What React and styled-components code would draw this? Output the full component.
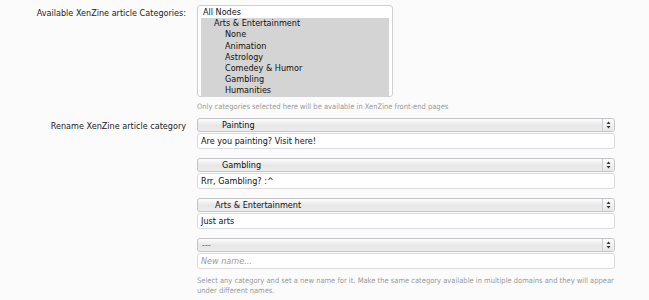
import styled, { createGlobalStyle } from 'styled-components';

const COLORS = {
  page: '#fbfbfc',
  text: '#111',
  label: '#222',
  hint: '#9a9a9a',
  border: '#cfcfd4',
  selected: '#d4d4d4',
  placeholder: '#999'
};

const FONT = '"DejaVu Sans Condensed", "DejaVu Sans", sans-serif';

const GlobalStyle = createGlobalStyle`
  html, body {
    margin: 0;
    padding: 0;
    background: ${COLORS.page};
  }
  body {
    font-family: ${FONT};
    color: ${COLORS.text};
  }
`;

const categories = [
  { name: 'All Nodes', depth: 0, selected: false },
  { name: 'Arts & Entertainment', depth: 1, selected: true },
  { name: 'None', depth: 2, selected: true },
  { name: 'Animation', depth: 2, selected: true },
  { name: 'Astrology', depth: 2, selected: true },
  { name: 'Comedey & Humor', depth: 2, selected: true },
  { name: 'Gambling', depth: 2, selected: true },
  { name: 'Humanities', depth: 2, selected: true }
];

const renames = [
  { category: 'Painting', indent: 24, name: 'Are you painting? Visit here!' },
  { category: 'Gambling', indent: 24, name: 'Rrr, Gambling? :^' },
  { category: 'Arts & Entertainment', indent: 17, name: 'Just arts' },
  { category: '---', indent: 4, name: '', muted: true }
];

function Arrows() {
  return (
    <svg width="5" height="8" viewBox="0 0 5 8">
      <path d="M2.5 0.5 L4.5 3 L0.5 3 Z" fill="#333" />
      <path d="M2.5 7.5 L4.5 5 L0.5 5 Z" fill="#333" />
    </svg>
  );
}

function FakeSelect({ label, indent, muted }) {
  return (
    <SelectBox>
      <SelectText indent={indent} muted={muted}>
        {label}
      </SelectText>
      <ArrowCell>
        <Arrows />
      </ArrowCell>
    </SelectBox>
  );
}

export default function App() {
  return (
    <>
      <GlobalStyle />
      <Form>
        <Row>
          <Label>Available XenZine article Categories:</Label>
          <Control>
            <ListBox>
              {categories.map((c) => (
                <ListItem key={c.name} depth={c.depth} selected={c.selected}>
                  {c.name}
                </ListItem>
              ))}
            </ListBox>
            <Hint>Only categories selected here will be available in XenZine front-end pages</Hint>
          </Control>
        </Row>

        <Row>
          <Label>Rename XenZine article category</Label>
          <Control>
            <Pairs>
              {renames.map((r) => (
                <Pair key={r.category}>
                  <FakeSelect label={r.category} indent={r.indent} muted={r.muted} />
                  <TextBox>
                    {r.name ? r.name : <Placeholder>New name...</Placeholder>}
                  </TextBox>
                </Pair>
              ))}
            </Pairs>
            <Hint $top={7}>
              Select any category and set a new name for it. Make the same category available in
              multiple domains and they will appear under different names.
            </Hint>
          </Control>
        </Row>
      </Form>
    </>
  );
}

const Form = styled.div`
  display: flex;
  flex-direction: column;
  gap: 6px;
  padding-top: 5px;
  width: 649px;
  height: 300px;
  box-sizing: border-box;
  overflow: hidden;
`;

const Row = styled.div`
  display: flex;
  gap: 11px;
`;

const Label = styled.div`
  width: 186px;
  flex-shrink: 0;
  text-align: right;
  font-size: 9px;
  color: ${COLORS.label};
  padding-top: 3px;
  line-height: 11px;
`;

const Control = styled.div`
  display: flex;
  flex-direction: column;
  width: 418px;
`;

const ListBox = styled.div`
  width: 196px;
  height: 92px;
  box-sizing: border-box;
  border: 1px solid ${COLORS.border};
  border-radius: 3px;
  background: #fff;
  padding: 1px 3px;
  display: flex;
  flex-direction: column;
`;

const ListItem = styled.div`
  font-size: 9px;
  line-height: 11.2px;
  padding-left: ${({ depth }) => 2 + depth * 11}px;
  background: ${({ selected }) => (selected ? COLORS.selected : 'transparent')};
  color: ${COLORS.text};
  white-space: nowrap;
`;

const Hint = styled.div`
  font-size: 7.5px;
  line-height: 10px;
  color: ${COLORS.hint};
  margin-top: ${({ $top }) => $top || 5}px;
`;

const Pairs = styled.div`
  display: flex;
  flex-direction: column;
  gap: 9px;
`;

const Pair = styled.div`
  display: flex;
  flex-direction: column;
  gap: 1px;
`;

const SelectBox = styled.div`
  display: flex;
  height: 14px;
  box-sizing: border-box;
  border: 1px solid #c4c4c8;
  border-radius: 3px;
  background: linear-gradient(#fdfdfd, #e6e6e6 55%, #ededed);
  overflow: hidden;
`;

const SelectText = styled.div`
  flex: 1;
  font-size: 9px;
  line-height: 12px;
  padding-left: ${({ indent }) => indent}px;
  color: ${({ muted }) => (muted ? '#666' : COLORS.text)};
  white-space: nowrap;
`;

const ArrowCell = styled.div`
  width: 11px;
  border-left: 1px solid #d0d0d4;
  display: flex;
  align-items: center;
  justify-content: center;
  background: linear-gradient(#fafafa, #e8e8e8);
`;

const TextBox = styled.div`
  height: 16px;
  box-sizing: border-box;
  border: 1px solid #dcdce0;
  border-radius: 3px;
  background: #fff;
  font-size: 9px;
  line-height: 14px;
  padding-left: 3px;
  color: ${COLORS.text};
  white-space: nowrap;
`;

const Placeholder = styled.span`
  font-style: italic;
  color: ${COLORS.placeholder};
`;
